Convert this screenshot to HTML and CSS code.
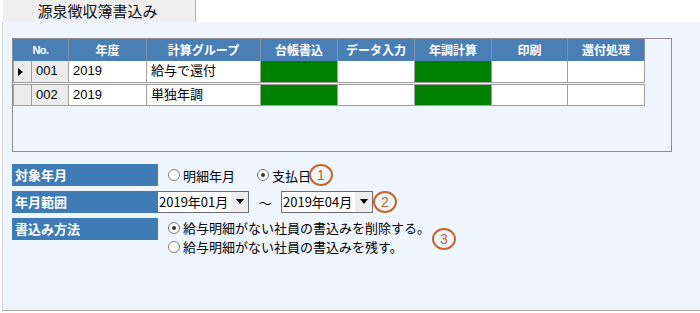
FILE: index.html
```html
<!DOCTYPE html>
<html lang="ja">
<head>
<meta charset="utf-8">
<title>源泉徴収簿書込み</title>
<link rel="stylesheet" href="styles.css">
</head>
<body>
<div class="screen">
  <div class="tabbar">
    <div class="tab">源泉徴収簿書込み</div>
  </div>
  <div class="panel">
    <div class="grid-box">
      <div class="grid">
        <div class="hc hc-no">No.</div>
        <div class="hc">年度</div>
        <div class="hc">計算グループ</div>
        <div class="hc">台帳書込</div>
        <div class="hc">データ入力</div>
        <div class="hc">年調計算</div>
        <div class="hc">印刷</div>
        <div class="hc">還付処理</div>

        <div class="c c-rh r1"><span class="arrow"></span></div>
        <div class="c c-gray r1">001</div>
        <div class="c r1">2019</div>
        <div class="c r1">給与で還付</div>
        <div class="c c-green r1"></div>
        <div class="c r1"></div>
        <div class="c c-green r1"></div>
        <div class="c r1"></div>
        <div class="c r1"></div>

        <div class="c c-rh r2"></div>
        <div class="c c-gray r2">002</div>
        <div class="c r2">2019</div>
        <div class="c r2">単独年調</div>
        <div class="c c-green r2"></div>
        <div class="c r2"></div>
        <div class="c c-green r2"></div>
        <div class="c r2"></div>
        <div class="c r2"></div>
      </div>
    </div>

    <div class="form">
      <div class="frow">
        <div class="flabel">対象年月</div>
        <div class="fctrl radios-inline">
          <label class="radio"><span class="rb"></span>明細年月</label>
          <label class="radio"><span class="rb on"></span>支払日</label>
        </div>
      </div>
      <div class="frow">
        <div class="flabel">年月範囲</div>
        <div class="fctrl range">
          <div class="select"><span class="sv">2019年01月</span><span class="sa"><span class="tri"></span></span></div>
          <span class="tilde">～</span>
          <div class="select"><span class="sv">2019年04月</span><span class="sa"><span class="tri"></span></span></div>
        </div>
      </div>
      <div class="frow">
        <div class="flabel">書込み方法</div>
        <div class="fctrl radios-stack">
          <label class="radio"><span class="rb on"></span>給与明細がない社員の書込みを削除する。</label>
          <label class="radio"><span class="rb"></span>給与明細がない社員の書込みを残す。</label>
        </div>
      </div>

      <span class="note n1">1</span>
      <span class="note n2">2</span>
      <span class="note n3">3</span>
    </div>
  </div>
</div>
</body>
</html>
```

FILE: styles.css
```css
* { box-sizing: border-box; }
html, body { margin: 0; padding: 0; background: #ffffff; }
body {
  font-family: "Liberation Sans", "Noto Sans CJK JP", sans-serif;
  font-size: 13px;
  color: #000;
  width: 700px;
  height: 313px;
  overflow: hidden;
}
.screen { padding-left: 2px; }

.tabbar { display: flex; height: 22px; }
.tab {
  width: 193px;
  height: 22px;
  margin-left: 1px;
  background: #efefef;
  border-right: 1px solid #b0b0b0;
  font-family: "Noto Sans CJK JP", sans-serif;
  font-size: 15px;
  letter-spacing: 0;
  line-height: 21px;
  text-align: center;
  padding-right: 3px;
  color: #111;
}

.panel {
  position: relative;
  height: 289px;
  background: #eef5fd;
  border-left: 1px solid #d2d6db;
  border-bottom: 1px solid #a9a9a9;
  padding: 16px 0 0 9px;
}

.grid-box {
  width: 660px;
  height: 114px;
  border: 1px solid #8e8e8e;
  background: #eef5fd;
}
.grid {
  display: grid;
  grid-template-columns: 19px 37px 78px 114px 77px 77px 77px 76px 77px;
  grid-template-rows: 22px 22px 23px;
}
.hc {
  background: #4a7fb6;
  color: #fff;
  font-weight: bold;
  font-family: "Noto Sans CJK JP", sans-serif;
  font-size: 12px;
  line-height: 22px;
  text-align: center;
  border-right: 1px solid #7d93ab;
}
.hc-no {
  grid-column: span 2;
  font-family: "Liberation Sans Narrow", "Liberation Sans", sans-serif;
  font-size: 11px;
  letter-spacing: -0.5px;
}
.c {
  background: #fff;
  border-right: 1px solid #a0a0a0;
  border-bottom: 1px solid #a0a0a0;
  line-height: 20px;
  padding-left: 4px;
  font-size: 13px;
  white-space: nowrap;
}
.c.r2 { border-top: 1px solid #a0a0a0; margin-top: 1px; }
.c-rh { background: #ececec; border-left: 1px solid #a0a0a0; display: flex; align-items: center; padding-left: 4px; }
.c-gray { background: #ececec; }
.c-green { background: #008000; }
.arrow {
  display: block;
  width: 0; height: 0;
  border-left: 5px solid #000;
  border-top: 4px solid transparent;
  border-bottom: 4px solid transparent;
}

.form {
  position: relative;
  margin-top: 12px;
  display: flex;
  flex-direction: column;
  gap: 5px;
  font-family: "Noto Sans CJK JP", sans-serif;
}
.frow { display: flex; align-items: flex-start; }
.flabel {
  width: 146px;
  height: 22px;
  flex: none;
  background: #3f7bb5;
  color: #fff;
  font-weight: bold;
  font-size: 13px;
  line-height: 22px;
  padding-left: 3px;
}
.fctrl { display: flex; }
.radios-inline { height: 22px; align-items: center; gap: 22px; padding-left: 10px; }
.radios-stack { flex-direction: column; padding-left: 10px; padding-top: 0; }
.radios-stack .radio { height: 19px; }
.radio {
  display: flex;
  align-items: center;
  gap: 3px;
  font-size: 13px;
  line-height: 19px;
  white-space: nowrap;
}
.rb {
  width: 12px; height: 12px;
  border: 1px solid #7a7a7a;
  border-radius: 50%;
  background: #fff;
  display: flex;
  align-items: center;
  justify-content: center;
  flex: none;
}
.rb.on::after {
  content: "";
  width: 4px; height: 4px;
  border-radius: 50%;
  background: #333;
}

.range { align-items: center; height: 22px; }
.select {
  width: 92px;
  height: 22px;
  border: 1px solid #6d6d6d;
  background: #fff;
  display: flex;
  align-items: stretch;
  margin-top: -1px;
}
.range .select:first-child { margin-left: -1px; }
.sv {
  flex: 1;
  font-family: "Liberation Sans Narrow", "Noto Sans CJK JP", sans-serif;
  font-size: 13px;
  line-height: 20px;
  padding-left: 1px;
  letter-spacing: 0;
}
.sa {
  width: 17px;
  background: #ededed;
  display: flex;
  align-items: center;
  justify-content: center;
}
.tri {
  width: 0; height: 0;
  border-top: 5px solid #000;
  border-left: 4px solid transparent;
  border-right: 4px solid transparent;
}
.tilde { width: 32px; text-align: center; font-size: 13px; }

.note {
  position: absolute;
  width: 24px;
  height: 22px;
  border: 2px solid #c5672a;
  border-radius: 50%;
  color: #c5672a;
  font-family: "Liberation Sans", sans-serif;
  font-size: 14px;
  line-height: 18px;
  text-align: center;
}
.n1 { left: 297px; top: 0px; }
.n2 { left: 361px; top: 27px; }
.n3 { left: 420px; top: 64px; }
```
